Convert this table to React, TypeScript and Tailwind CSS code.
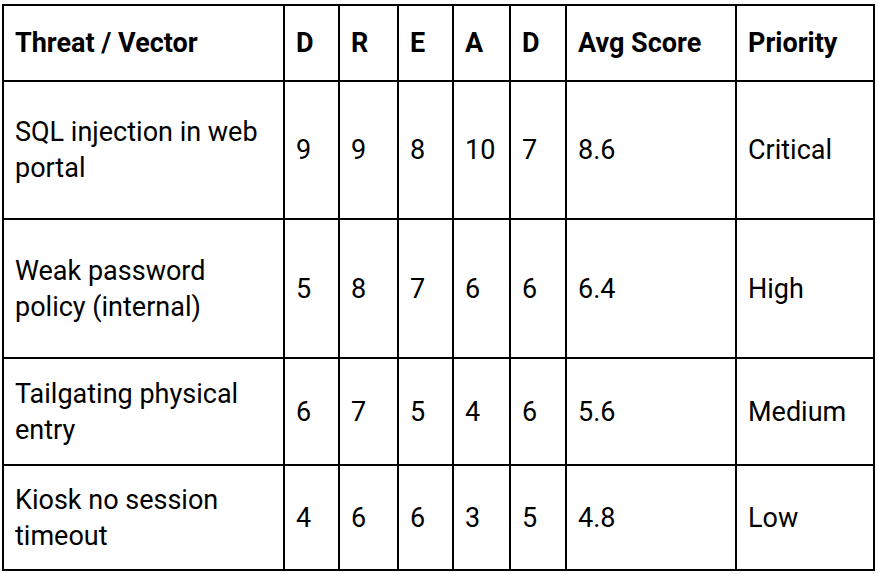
const HEADERS = ['Threat / Vector', 'D', 'R', 'E', 'A', 'D', 'Avg Score', 'Priority'];

const ROWS: { h: string; cells: string[] }[] = [
  { h: 'h-[136px]', cells: ['SQL injection in web portal', '9', '9', '8', '10', '7', '8.6', 'Critical'] },
  { h: 'h-[137px]', cells: ['Weak password policy (internal)', '5', '8', '7', '6', '6', '6.4', 'High'] },
  { h: 'h-[105px]', cells: ['Tailgating physical entry', '6', '7', '5', '4', '6', '5.6', 'Medium'] },
  { h: 'h-[103px]', cells: ['Kiosk no session timeout', '4', '6', '6', '3', '5', '4.8', 'Low'] },
];

export default function App() {
  return (
    <div className="min-h-screen bg-white pl-[2px] pt-[4px] font-['Roboto',sans-serif] text-[27px] text-black">
      <div className="grid w-[873px] grid-cols-[279px_53px_57px_53px_55px_54px_168px_136px] gap-[2px] bg-black p-[2px]">
        {HEADERS.map((label, i) => (
          <div key={i} className="flex h-[74px] items-center bg-white px-[11px] font-bold leading-[36px]">
            {label}
          </div>
        ))}
        {ROWS.map((row) =>
          row.cells.map((cell, i) => (
            <div key={row.cells[0] + i} className={`flex items-center bg-white px-[11px] leading-[36px] ${row.h}`}>
              {cell}
            </div>
          ))
        )}
      </div>
    </div>
  );
}
